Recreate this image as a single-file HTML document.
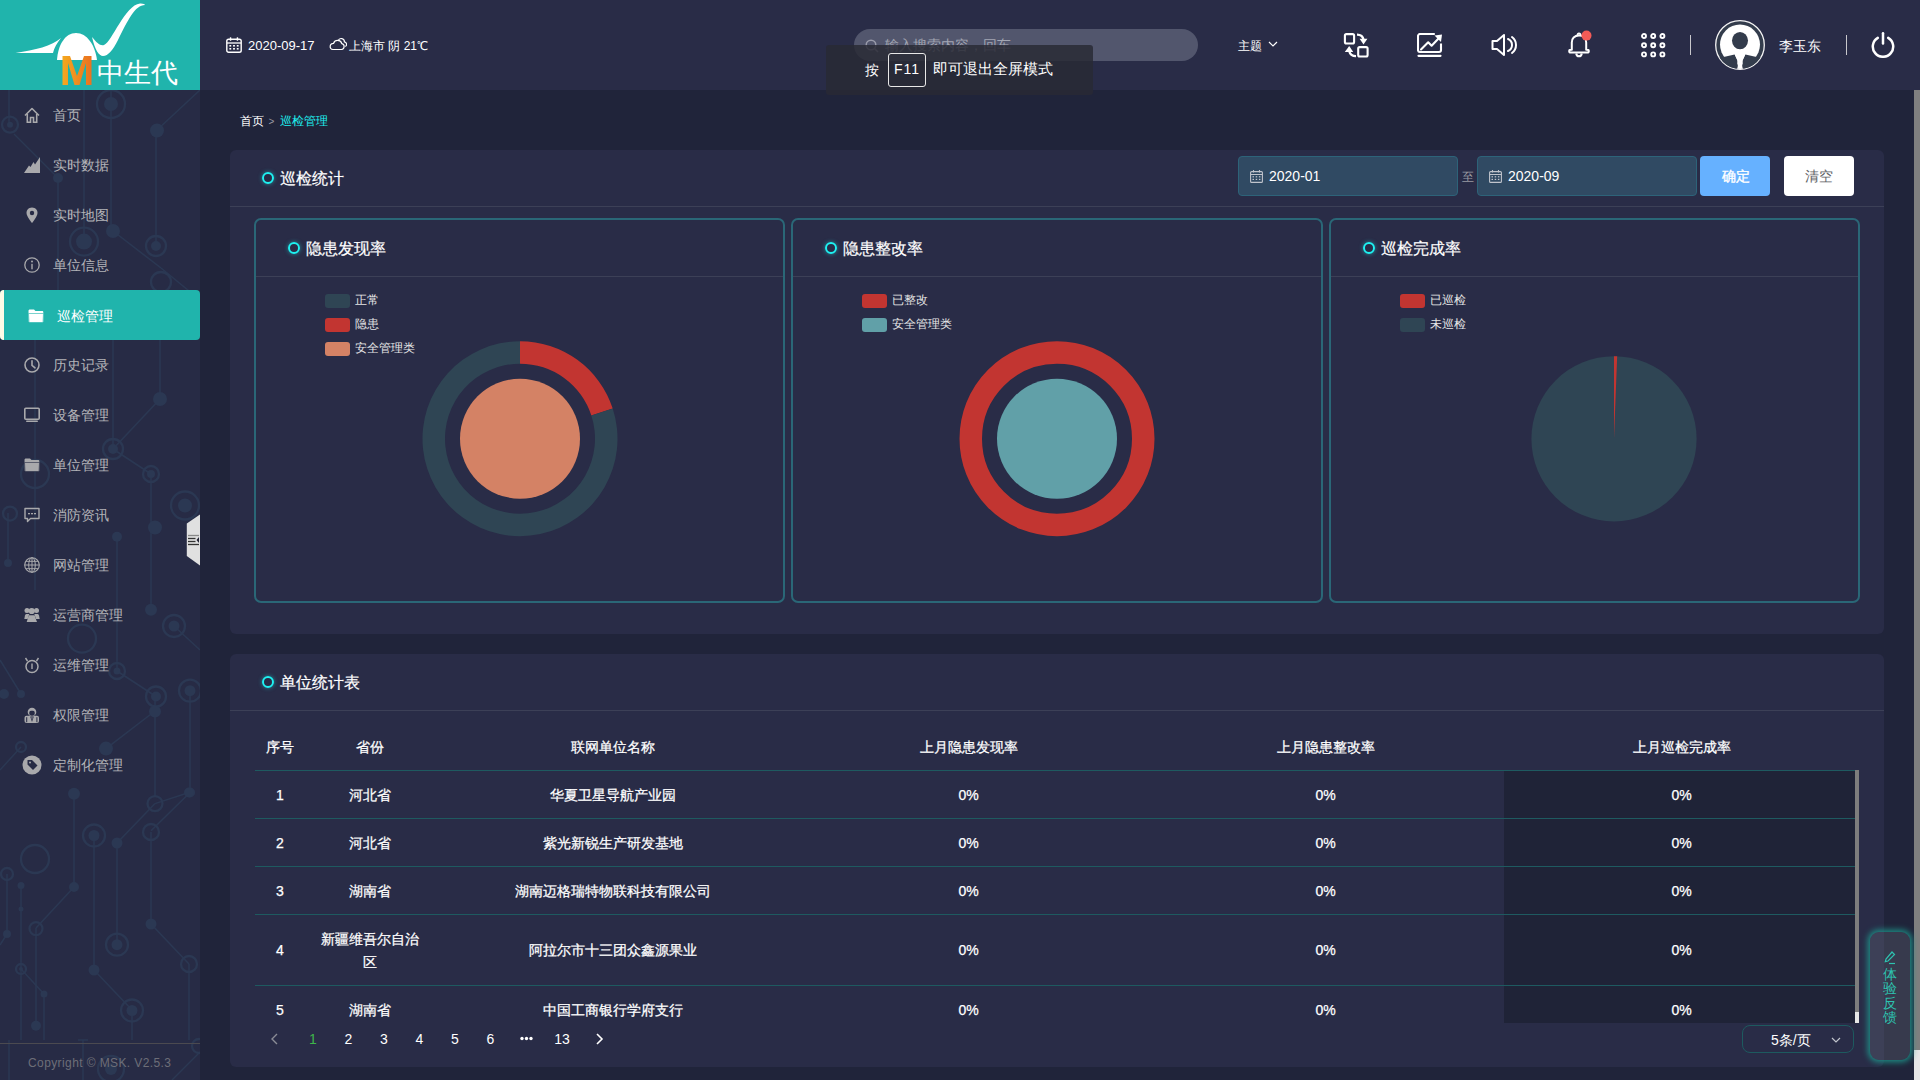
<!DOCTYPE html>
<html><head><meta charset="utf-8">
<style>
*{margin:0;padding:0;box-sizing:border-box}
html,body{width:1920px;height:1080px;overflow:hidden;background:#20243a;font-family:"Liberation Sans",sans-serif;color:#fff}
.abs{position:absolute}
#logo{left:0;top:0;width:200px;height:90px;background:#20b4ac}
#header{left:200px;top:0;width:1720px;height:90px;background:#292c47}
#sidebar{left:0;top:90px;width:200px;height:990px;background:#272b45;overflow:hidden}
.mi{position:absolute;left:0;width:200px;height:50px;color:#b4b4b8;font-size:14px;line-height:50px}
.mi .ic{position:absolute;left:24px;top:17px;width:16px;height:16px}
.mi .tx{position:absolute;left:53px;top:0}
.mi.act{background:#20b4ac;color:#fff;border-radius:4px 4px 4px 4px}
.mi.act:before{content:"";position:absolute;left:0;top:0;width:4px;height:50px;background:#fdfbe6;border-radius:4px 0 0 4px}
.panel{position:absolute;background:#292c47;border-radius:6px}
.ptitle{position:absolute;font-size:16px;line-height:20px;color:#fff;-webkit-text-stroke:0.2px #fff}
.dot{position:absolute;width:12px;height:12px;border:2.5px solid #1ef2f2;border-radius:50%;box-shadow:0 0 4px rgba(30,242,242,.5)}
.card{position:absolute;top:218px;height:385px;border:2px solid #2a6777;border-radius:7px}
.legend{position:absolute;font-size:12px;color:#e6e6e6;line-height:14px}
.sw{position:absolute;width:25px;height:14px;border-radius:3px}
.th{position:absolute;font-size:14px;font-weight:500;color:#fff;-webkit-text-stroke:0.25px #fff;line-height:20px;text-align:center}
.td{position:absolute;font-size:14px;font-weight:500;color:#fff;-webkit-text-stroke:0.25px #fff;line-height:20px;text-align:center}
.rl{position:absolute;left:255px;width:1600px;height:1px;background:#1e5a60}
.pg{position:absolute;top:1029px;font-size:14px;line-height:20px;color:#fff;text-align:center}
</style></head><body>

<!-- LOGO -->
<div id="logo" class="abs">
<svg width="200" height="90" viewBox="0 0 200 90" style="position:absolute;left:0;top:0">
  <path d="M15.5 53 C35 50 52 46 61 38 C57 43 54 48 53 53 Z" fill="#fff"/>
  <path d="M57 60 C58 45 65 33 76 33 C87 33 95 45 97 60 Z" fill="#fff"/>
  <path d="M92 37 C97 43 100 46 104 45 C112 42 125 5 140 3.5 C143 3.3 145 4.3 145 5 C135 5 128 20 118 40 C113 50 108 56 103 56 C99 56 95 50 92 37 Z" fill="#fff"/>
  <defs><linearGradient id="mg" x1="0" x2="1" y1="0" y2="0"><stop offset="0" stop-color="#f5a81f"/><stop offset="1" stop-color="#ea7220"/></linearGradient></defs>
  <path d="M62.5 85 L62.5 56 L70 56 L77 76 L84 56 L91.5 56 L91.5 85 L86 85 L86 63 L79.5 85 L74.5 85 L68 63 L68 85 Z" fill="url(#mg)"/>
  <text x="97" y="82" font-size="27.3" fill="#fff" font-family="Liberation Sans, sans-serif" font-weight="300">中生代</text>
</svg>
</div>

<!-- HEADER -->
<div id="header" class="abs">
<!-- calendar -->
<svg class="abs" style="left:26px;top:37px" width="16" height="16" viewBox="0 0 16 16"><rect x="0.8" y="2.3" width="14.4" height="12.9" rx="1.8" fill="none" stroke="#fff" stroke-width="1.4"/><line x1="1" y1="6" x2="15" y2="6" stroke="#fff" stroke-width="1.3"/><rect x="3.8" y="0.2" width="1.5" height="3.6" rx="0.5" fill="#fff"/><rect x="10.7" y="0.2" width="1.5" height="3.6" rx="0.5" fill="#fff"/><g fill="#fff"><rect x="3.4" y="8" width="1.8" height="1.6"/><rect x="7.1" y="8" width="1.8" height="1.6"/><rect x="10.8" y="8" width="1.8" height="1.6"/><rect x="3.4" y="11" width="1.8" height="1.6"/><rect x="7.1" y="11" width="1.8" height="1.6"/><rect x="10.8" y="11" width="1.8" height="1.6"/></g></svg>
<div class="abs" style="left:48px;top:37px;font-size:13px;line-height:18px;color:#fff">2020-09-17</div>
<!-- cloud -->
<svg class="abs" style="left:129px;top:37px" width="18" height="14" viewBox="0 0 18 14"><path d="M4 12.5 H12.5 A3 3 0 0 0 12.8 6.6 A4.3 4.3 0 0 0 4.6 6.3 A3.1 3.1 0 0 0 4 12.5 Z" fill="none" stroke="#fff" stroke-width="1.2"/><path d="M9.2 3.6 A3.2 3.2 0 0 1 15.4 4.8 A2.6 2.6 0 0 1 16.3 9.6" fill="none" stroke="#fff" stroke-width="1.2"/></svg>
<div class="abs" style="left:149px;top:36.5px;font-size:12px;line-height:18px;color:#fff">上海市 阴 21℃</div>
<!-- search -->
<div class="abs" style="left:654px;top:29px;width:344px;height:32px;border-radius:16px;background:#52566d"></div>
<svg class="abs" style="left:665px;top:39px" width="14" height="14" viewBox="0 0 14 14"><circle cx="6" cy="6" r="4.8" fill="none" stroke="#9a9cab" stroke-width="1.5"/><line x1="9.5" y1="9.5" x2="13" y2="13" stroke="#9a9cab" stroke-width="1.6"/></svg>
<div class="abs" style="left:685px;top:36px;font-size:14px;line-height:18px;color:#a3a6b3">输入搜索内容，回车</div>
<!-- theme -->
<div class="abs" style="left:1038px;top:36.5px;font-size:12px;line-height:18px;color:#fff">主题</div>
<svg class="abs" style="left:1068px;top:41px" width="10" height="7" viewBox="0 0 10 7"><path d="M1 1 L5 5 L9 1" fill="none" stroke="#fff" stroke-width="1.2"/></svg>
<!-- swap icon -->
<svg class="abs" style="left:1143px;top:33px" width="26" height="25" viewBox="0 0 26 25"><rect x="1.9" y="1.1" width="9.2" height="9.4" rx="1.5" fill="none" stroke="#fff" stroke-width="2.1"/><rect x="15.2" y="14.1" width="9.4" height="9.4" rx="1.5" fill="none" stroke="#fff" stroke-width="2.1"/><path d="M14 1.6 C17.5 1.6 20 3.5 20.6 7" fill="none" stroke="#fff" stroke-width="2.3"/><path d="M16.6 5.8 L24.4 5.8 L20.5 11.5 Z" fill="#fff"/><path d="M13 23.2 C9.5 23.2 7 21.5 6.2 18" fill="none" stroke="#fff" stroke-width="2.3"/><path d="M1.8 19 L10.2 19 L6.2 13 Z" fill="#fff"/></svg>
<!-- chart icon -->
<svg class="abs" style="left:1217px;top:33px" width="26" height="25" viewBox="0 0 26 25"><path d="M17.8 1 H3 C2 1 1 2 1 3 V17 C1 18 2 19 3 19 H22 C23 19 24 18 24 17 V10.5" fill="none" stroke="#fff" stroke-width="2.1"/><line x1="1.5" y1="22.8" x2="23.5" y2="22.8" stroke="#fff" stroke-width="2.2" stroke-linecap="round"/><path d="M4 16.5 L11.2 9.3 L14.6 12.7 L21.5 5.5" fill="none" stroke="#fff" stroke-width="2.1" stroke-linecap="round" stroke-linejoin="round"/><path d="M17.5 2.5 L25 1.5 L24 9 Z" fill="#fff"/></svg>
<!-- volume -->
<svg class="abs" style="left:1291px;top:33px" width="27" height="24" viewBox="0 0 27 24"><path d="M1.5 8 H6 L13 2 V22 L6 16 H1.5 Z" fill="none" stroke="#fff" stroke-width="2" stroke-linejoin="round"/><path d="M17 6 A6.5 6.5 0 0 1 17 18" fill="none" stroke="#fff" stroke-width="2" stroke-linecap="round"/><path d="M21 4 A10 10 0 0 1 21 20" fill="none" stroke="#fff" stroke-width="2" stroke-linecap="round"/></svg>
<!-- bell -->
<svg class="abs" style="left:1367px;top:30px" width="26" height="28" viewBox="0 0 26 28"><path d="M4.8 19.8 V12.5 C4.8 8.5 7.3 5.6 12 5.6 C16.7 5.6 19.2 8.5 19.2 12.5 V19.8 H20.2 C21.3 19.8 21.8 20.5 21.8 21.2 C21.8 22 21.3 22.6 20.2 22.6 H3.8 C2.7 22.6 2.2 22 2.2 21.2 C2.2 20.5 2.7 19.8 3.8 19.8 Z" fill="none" stroke="#fff" stroke-width="2" stroke-linejoin="round"/><path d="M10.3 5.8 C10.5 4 11 3.4 12 3.4 C13 3.4 13.5 4 13.7 5.8" fill="none" stroke="#fff" stroke-width="1.8"/><path d="M9.2 23.5 C9.5 25.5 10.7 26.3 12 26.3 C13.3 26.3 14.5 25.5 14.8 23.5" fill="none" stroke="#fff" stroke-width="2"/><circle cx="19.5" cy="5.6" r="5" fill="#f45b57"/></svg>
<!-- grid -->
<svg class="abs" style="left:1441px;top:33px" width="25" height="25" viewBox="0 0 25 25"><g fill="none" stroke="#fff" stroke-width="1.9"><circle cx="3" cy="3" r="2"/><circle cx="12.2" cy="3" r="2"/><circle cx="21.4" cy="3" r="2"/><circle cx="3" cy="12.2" r="2"/><circle cx="12.2" cy="12.2" r="2"/><circle cx="21.4" cy="12.2" r="2"/><circle cx="3" cy="21.4" r="2"/><circle cx="12.2" cy="21.4" r="2"/><circle cx="21.4" cy="21.4" r="2"/></g></svg>
<div class="abs" style="left:1490px;top:35px;width:1px;height:20px;background:#c8c8cc"></div>
<!-- avatar -->
<svg class="abs" style="left:1515px;top:20px" width="50" height="50" viewBox="0 0 50 50"><defs><clipPath id="avc"><circle cx="25" cy="25" r="24"/></clipPath></defs><circle cx="25" cy="25" r="24" fill="#333c4c"/><circle cx="25" cy="25" r="24.3" fill="none" stroke="#f4f4f4" stroke-width="1.3"/><circle cx="25" cy="24.6" r="20" fill="#fff"/><g clip-path="url(#avc)"><ellipse cx="25" cy="20.6" rx="8" ry="8.7" fill="#333c4c"/><path d="M0 50 V38 L8.6 37 L19.6 34.4 L22.6 41 L22.2 47 L21.5 50 H28.5 L27.8 47 L27.4 41 L30.4 34.4 L41.5 37 L50 38 V50 Z" fill="#333c4c"/><path d="M19.8 34.4 H30.2 L27.6 40 L27.2 46 L28 50 H22 L22.8 46 L22.4 40 Z" fill="#fff"/></g></svg>
<div class="abs" style="left:1579px;top:37px;font-size:14px;line-height:18px;color:#fff">李玉东</div>
<div class="abs" style="left:1646px;top:35px;width:1px;height:20px;background:#c8c8cc"></div>
<!-- power -->
<svg class="abs" style="left:1671px;top:32px" width="24" height="26" viewBox="0 0 24 26"><path d="M6.8 5.8 A10.2 10.2 0 1 0 17.2 5.8" fill="none" stroke="#fff" stroke-width="2.5" stroke-linecap="round"/><line x1="12" y1="1.3" x2="12" y2="11.6" stroke="#fff" stroke-width="2.5" stroke-linecap="round"/></svg>
</div>
<!-- F11 tooltip -->
<div class="abs" style="left:826px;top:45px;width:267px;height:50px;background:rgba(40,42,52,.84);border-radius:3px"></div>
<div class="abs" style="left:865px;top:60px;font-size:14px;line-height:20px;color:#fff">按</div>
<div class="abs" style="left:888px;top:53px;width:38px;height:34px;border:1.5px solid #e8e8e8;border-radius:3px;font-size:14px;line-height:31px;text-align:center;color:#fff;letter-spacing:1px">F11</div>
<div class="abs" style="left:933px;top:59px;font-size:15px;line-height:20px;color:#fff">即可退出全屏模式</div>

<!-- SIDEBAR -->
<div id="sidebar" class="abs">
<svg class="abs" style="left:0;top:0" width="200" height="990" viewBox="0 90 200 990"><g fill="none" stroke="#2b3853" stroke-width="1.5"><line x1="111" y1="90" x2="111" y2="231"/><line x1="113" y1="231" x2="161" y2="268"/><line x1="161" y1="268" x2="200" y2="300"/><line x1="156" y1="130" x2="156" y2="246"/><line x1="157" y1="130" x2="200" y2="90"/><line x1="84" y1="90" x2="84" y2="241"/><line x1="9" y1="90" x2="9" y2="125"/><line x1="14" y1="134" x2="58" y2="178"/><line x1="58" y1="178" x2="58" y2="300"/><line x1="160" y1="340" x2="160" y2="399"/><line x1="160" y1="399" x2="113" y2="449"/><line x1="113" y1="449" x2="151" y2="474"/><line x1="151" y1="474" x2="151" y2="590"/><line x1="8" y1="513" x2="8" y2="563"/><line x1="117" y1="536" x2="117" y2="590"/><line x1="35" y1="300" x2="35" y2="590"/><line x1="113" y1="300" x2="113" y2="449"/><line x1="174" y1="626" x2="200" y2="650"/><line x1="117" y1="590" x2="117" y2="671"/><line x1="117" y1="671" x2="156" y2="696.5"/><line x1="155" y1="696" x2="155" y2="796"/><line x1="155" y1="711" x2="106" y2="748.6"/><line x1="190" y1="690" x2="190" y2="792.5"/><line x1="190" y1="792.5" x2="151" y2="830.7"/><line x1="0" y1="660" x2="21" y2="694"/><line x1="21" y1="747" x2="0" y2="770"/><line x1="151" y1="590" x2="151" y2="610"/><line x1="21" y1="885" x2="21" y2="1040"/><line x1="21" y1="969" x2="44" y2="994"/><line x1="44" y1="994" x2="44" y2="1040"/><line x1="7" y1="874" x2="7" y2="934"/><line x1="7" y1="934" x2="0" y2="945"/><line x1="36" y1="928" x2="36" y2="1025"/><line x1="36" y1="928" x2="74" y2="887"/><line x1="74" y1="887" x2="74" y2="790"/><line x1="94" y1="835" x2="94" y2="970"/><line x1="94" y1="970" x2="132" y2="1010"/><line x1="132" y1="1010" x2="132" y2="1040"/><line x1="117" y1="843" x2="117" y2="945"/><line x1="117" y1="843" x2="155" y2="803.6"/><line x1="155" y1="803.6" x2="189" y2="792.5"/><line x1="151" y1="832" x2="151" y2="924"/><line x1="151" y1="924" x2="189" y2="964"/><line x1="189" y1="964" x2="189" y2="1040"/></g><g fill="none" stroke="#2b3853" stroke-width="2.3"><circle cx="111" cy="104" r="14"/><circle cx="156" cy="246" r="10"/><circle cx="161" cy="282" r="10"/><circle cx="84" cy="241.6" r="14"/><circle cx="10" cy="124.7" r="8"/><circle cx="113" cy="449" r="10"/><circle cx="151" cy="474" r="8"/><circle cx="185" cy="505.5" r="14"/><circle cx="10" cy="513.6" r="7"/><circle cx="35" cy="474" r="14"/><circle cx="174" cy="626" r="11"/><circle cx="117" cy="671" r="8"/><circle cx="156" cy="696.5" r="10"/><circle cx="190" cy="690.7" r="11"/><circle cx="21" cy="747" r="5"/><circle cx="82" cy="638.6" r="14"/><circle cx="21" cy="969" r="5"/><circle cx="7" cy="874" r="6"/><circle cx="36" cy="928.6" r="6.5"/><circle cx="94" cy="835.5" r="11"/><circle cx="132" cy="1010.5" r="11"/><circle cx="117" cy="944.7" r="11"/><circle cx="155" cy="803.6" r="7.5"/><circle cx="151" cy="832" r="8"/><circle cx="189" cy="964" r="8"/><circle cx="35" cy="859" r="14"/></g><g fill="#2b3853"><circle cx="111" cy="104" r="7"/><circle cx="113" cy="231" r="7"/><circle cx="156" cy="246" r="5"/><circle cx="157" cy="130.5" r="7"/><circle cx="84" cy="241.6" r="8"/><circle cx="58" cy="178" r="5"/><circle cx="10" cy="124.7" r="3"/><circle cx="160" cy="399" r="7"/><circle cx="113" cy="449" r="5"/><circle cx="155" cy="527.5" r="7"/><circle cx="117" cy="536.7" r="5"/><circle cx="8" cy="563" r="4"/><circle cx="185" cy="505.5" r="7"/><circle cx="151" cy="474" r="4"/><circle cx="151" cy="609.7" r="6"/><circle cx="174" cy="626" r="5.5"/><circle cx="155" cy="711.5" r="6"/><circle cx="106" cy="748.6" r="7"/><circle cx="190" cy="792.5" r="5"/><circle cx="21" cy="694" r="4"/><circle cx="4" cy="694" r="5"/><circle cx="74" cy="793.7" r="6"/><circle cx="117" cy="671" r="3.5"/><circle cx="156" cy="696.5" r="5"/><circle cx="190" cy="690.7" r="5.5"/><circle cx="21" cy="885.5" r="3.5"/><circle cx="21" cy="909" r="2.5"/><circle cx="44" cy="994" r="3.5"/><circle cx="7" cy="934" r="4"/><circle cx="36" cy="1025.8" r="5"/><circle cx="74" cy="887" r="5"/><circle cx="94" cy="835.5" r="5.5"/><circle cx="94" cy="970" r="5.5"/><circle cx="132" cy="1010.5" r="5.5"/><circle cx="117" cy="843" r="5.5"/><circle cx="117" cy="944.7" r="5.5"/><circle cx="189" cy="792.5" r="5"/><circle cx="151" cy="924" r="5.5"/><circle cx="21" cy="969" r="2"/></g></svg><svg class="abs" style="left:0;top:0" width="200" height="990" viewBox="0 90 200 990"><g fill="none" stroke="#2b3853" stroke-width="1.5"><line x1="9" y1="1040" x2="9" y2="1080"/><line x1="83" y1="1040" x2="83" y2="1080"/><line x1="200" y1="1052" x2="172" y2="1080"/><line x1="78" y1="1040" x2="88" y2="1040"/></g><g fill="none" stroke="#2b3853" stroke-width="2.3"><circle cx="111" cy="1069" r="13"/><circle cx="199" cy="1046" r="7"/></g><circle cx="111" cy="1069" r="6" fill="#2b3853"/></svg>
<div class="mi" style="top:0px"><svg class="ic" width="16" height="16" viewBox="0 0 16 16" overflow="visible"><path d="M1 8.5 L8 1.5 L15 8.5" fill="none" stroke="#a9a9ac" stroke-width="1.6" stroke-linejoin="round"/><path d="M3.3 7 V15.3 H6.5 V10.5 H9.5 V15.3 H12.7 V7" fill="none" stroke="#a9a9ac" stroke-width="1.6"/></svg><span class="tx">首页</span></div>
<div class="mi" style="top:50px"><svg class="ic" width="16" height="16" viewBox="0 0 16 16" overflow="visible"><path d="M0 16 L5 8.5 L6.5 10 L9.5 5 L11 7.5 L16 0 V16 Z" fill="#a9a9ac"/></svg><span class="tx">实时数据</span></div>
<div class="mi" style="top:100px"><svg class="ic" width="16" height="16" viewBox="0 0 16 16" overflow="visible"><path d="M8 0.5 C4.3 0.5 2.5 3.3 2.5 6 C2.5 9.5 8 16 8 16 C8 16 13.5 9.5 13.5 6 C13.5 3.3 11.7 0.5 8 0.5 Z" fill="#a9a9ac"/><circle cx="8" cy="6" r="2.2" fill="#272b45"/></svg><span class="tx">实时地图</span></div>
<div class="mi" style="top:150px"><svg class="ic" width="16" height="16" viewBox="0 0 16 16" overflow="visible"><circle cx="8" cy="8" r="7.2" fill="none" stroke="#a9a9ac" stroke-width="1.3"/><circle cx="8" cy="4.6" r="1" fill="#a9a9ac"/><rect x="7.3" y="6.8" width="1.4" height="5.5" fill="#a9a9ac"/></svg><span class="tx">单位信息</span></div>
<div class="mi act" style="top:200px"><svg class="ic" style="left:28px;top:18px" width="16" height="16" viewBox="0 0 16 16"><path d="M0.5 3 C0.5 2 1 1.5 2 1.5 H6 L7.5 3 H14 C15 3 15.3 3.5 15.3 4 V14 H0.7 Z" fill="#fff"/><path d="M0.5 5.5 H15.5 L15 14.5 H1 Z" fill="#fff" stroke="#20b4ac" stroke-width="0.6"/></svg><span class="tx" style="left:57px;top:1px">巡检管理</span></div>
<div class="mi" style="top:250px"><svg class="ic" width="16" height="16" viewBox="0 0 16 16" overflow="visible"><circle cx="8" cy="8" r="7" fill="none" stroke="#a9a9ac" stroke-width="1.6"/><path d="M8 3.8 V8.3 L11 10.8" fill="none" stroke="#a9a9ac" stroke-width="1.6" stroke-linecap="round"/></svg><span class="tx">历史记录</span></div>
<div class="mi" style="top:300px"><svg class="ic" width="16" height="16" viewBox="0 0 16 16" overflow="visible"><rect x="0.8" y="1.3" width="14.4" height="11" rx="1" fill="none" stroke="#a9a9ac" stroke-width="1.6"/><rect x="2" y="13.5" width="12" height="1.6" rx="0.8" fill="#a9a9ac"/></svg><span class="tx">设备管理</span></div>
<div class="mi" style="top:350px"><svg class="ic" width="16" height="16" viewBox="0 0 16 16" overflow="visible"><path d="M0.5 3 C0.5 2 1 1.5 2 1.5 H6 L7.5 3 H14 C15 3 15.3 3.5 15.3 4 V14 H0.7 Z" fill="#a9a9ac"/><path d="M0.5 5.5 H15.5 L15 14.5 H1 Z" fill="#a9a9ac" stroke="#272b45" stroke-width="0.6"/></svg><span class="tx">单位管理</span></div>
<div class="mi" style="top:400px"><svg class="ic" width="16" height="16" viewBox="0 0 16 16" overflow="visible"><path d="M1 1.5 H15 V11.5 H6.5 L3.5 14.5 V11.5 H1 Z" fill="none" stroke="#a9a9ac" stroke-width="1.4" stroke-linejoin="round"/><rect x="4" y="6" width="2" height="1.3" fill="#a9a9ac"/><rect x="7" y="6" width="2" height="1.3" fill="#a9a9ac"/><rect x="10" y="6" width="2" height="1.3" fill="#a9a9ac"/></svg><span class="tx">消防资讯</span></div>
<div class="mi" style="top:450px"><svg class="ic" width="16" height="16" viewBox="0 0 16 16" overflow="visible"><circle cx="8" cy="8" r="7.3" fill="none" stroke="#a9a9ac" stroke-width="1.1"/><ellipse cx="8" cy="8" rx="3.3" ry="7.3" fill="none" stroke="#a9a9ac" stroke-width="1"/><line x1="8" y1="0.7" x2="8" y2="15.3" stroke="#a9a9ac" stroke-width="1"/><line x1="0.7" y1="8" x2="15.3" y2="8" stroke="#a9a9ac" stroke-width="1"/><path d="M1.8 4.3 H14.2 M1.8 11.7 H14.2" stroke="#a9a9ac" stroke-width="1"/></svg><span class="tx">网站管理</span></div>
<div class="mi" style="top:500px"><svg class="ic" width="16" height="16" viewBox="0 0 16 16" overflow="visible"><circle cx="7.7" cy="4" r="3.1" fill="#a9a9ac"/><circle cx="3" cy="3.6" r="2.5" fill="#a9a9ac"/><circle cx="12.5" cy="3.6" r="2.5" fill="#a9a9ac"/><path d="M0.3 12 L1 8.5 C1.3 7.3 2 7 3 7 H5.3 L3.6 12 Z" fill="#a9a9ac"/><path d="M15.7 12 L15 8.5 C14.7 7.3 14 7 13 7 H10.3 L12 12 Z" fill="#a9a9ac"/><path d="M4.8 8.2 H10.6 L13 15 H2.7 Z" fill="#a9a9ac"/></svg><span class="tx">运营商管理</span></div>
<div class="mi" style="top:550px"><svg class="ic" width="16" height="16" viewBox="0 0 16 16" overflow="visible"><circle cx="8" cy="9.5" r="6" fill="none" stroke="#a9a9ac" stroke-width="1.5"/><path d="M3.5 4 L1.5 1 M12.5 4 L14.5 1" stroke="#a9a9ac" stroke-width="1.4"/><rect x="7.3" y="6.5" width="1.4" height="5.5" fill="#a9a9ac"/></svg><span class="tx">运维管理</span></div>
<div class="mi" style="top:600px"><svg class="ic" width="16" height="16" viewBox="0 0 16 16" overflow="visible"><circle cx="8" cy="5" r="4.3" fill="#a9a9ac"/><path d="M5.3 5 C5.5 4.2 6.5 3.8 8 3.8 C9.5 3.8 10.5 4.2 10.7 5 V6.5 C10.7 8 9.5 9 8 9 C6.5 9 5.3 8 5.3 6.5 Z" fill="#272b45"/><rect x="0.5" y="8.8" width="14.5" height="7.2" rx="2" fill="#a9a9ac"/><rect x="2.2" y="10.2" width="1" height="5" fill="#272b45"/><rect x="12.4" y="10.2" width="1" height="5" fill="#272b45"/><path d="M6.2 9.5 H9.8 L8 15 Z" fill="#272b45"/><path d="M7.3 10.3 H8.7 L8 13 Z" fill="#a9a9ac"/></svg><span class="tx">权限管理</span></div>
<div class="mi" style="top:650px"><svg class="ic" width="16" height="16" viewBox="0 0 16 16" overflow="visible"><circle cx="8" cy="8" r="9.5" fill="#a9a9ac"/><path d="M3.5 5 V3.5 C3.5 3.2 3.7 3 4 3 H8 L13.5 8.5 L9 13 L3.5 7.5 Z" fill="#272b45"/><circle cx="6" cy="5.5" r="1" fill="#a9a9ac"/></svg><span class="tx">定制化管理</span></div>
<div class="abs" style="left:0;top:953px;width:200px;height:1px;background:#4b4a50"></div>
<div class="abs" style="left:28px;top:965px;font-size:12px;line-height:16px;color:#6d6e78;letter-spacing:0.4px">Copyright © MSK. V2.5.3</div>
</div>
<svg class="abs" style="left:186px;top:514px" width="14" height="52" viewBox="0 0 14 52"><path d="M14 0.5 V51.5 L0.8 42 V9.5 Z" fill="#e0e0e0"/><g stroke-width="1.3"><line x1="2" y1="21.5" x2="13" y2="21.5" stroke="#888"/><line x1="2" y1="24.5" x2="9.5" y2="24.5" stroke="#333"/><line x1="2" y1="27.5" x2="9.5" y2="27.5" stroke="#333"/><line x1="2" y1="30.5" x2="13" y2="30.5" stroke="#333"/></g><path d="M13 23 L10.5 26 L13 29 Z" fill="#223"/></svg>

<!-- MAIN -->
<div class="abs" style="left:240px;top:113px;font-size:12px;line-height:16px;color:#fff">首页</div><div class="abs" style="left:268.5px;top:114px;font-size:10px;line-height:16px;color:#9a9aa2">&gt;</div><div class="abs" style="left:280px;top:113px;font-size:12px;line-height:16px;color:#1ef0f0">巡检管理</div>

<div class="panel" style="left:230px;top:150px;width:1654px;height:484px">
<div class="dot" style="left:32px;top:22px"></div><div class="ptitle" style="left:50px;top:19px">巡检统计</div>
<div class="abs" style="left:0;top:56px;width:1654px;height:1px;background:#3c4057"></div>
<div class="abs" style="left:1008px;top:6px;width:220px;height:40px;background:#304a63;border:1px solid #2d6379;border-radius:4px"><svg class="abs" style="left:11px;top:13px" width="13" height="13" viewBox="0 0 13 13"><rect x="0.6" y="1.6" width="11.8" height="10.8" rx="1" fill="none" stroke="#c0c4cc" stroke-width="1.1"/><line x1="0.6" y1="4.5" x2="12.4" y2="4.5" stroke="#c0c4cc" stroke-width="1"/><line x1="3.5" y1="0" x2="3.5" y2="2.5" stroke="#c0c4cc" stroke-width="1.1"/><line x1="9.5" y1="0" x2="9.5" y2="2.5" stroke="#c0c4cc" stroke-width="1.1"/><g fill="#c0c4cc"><rect x="2.5" y="6.2" width="1.5" height="1.2"/><rect x="5.7" y="6.2" width="1.5" height="1.2"/><rect x="8.9" y="6.2" width="1.5" height="1.2"/><rect x="2.5" y="8.8" width="1.5" height="1.2"/><rect x="5.7" y="8.8" width="1.5" height="1.2"/><rect x="8.9" y="8.8" width="1.5" height="1.2"/></g></svg><div class="abs" style="left:30px;top:10px;font-size:14px;line-height:18px;color:#fff">2020-01</div></div>
<div class="abs" style="left:1232px;top:19px;font-size:12px;line-height:16px;color:#9a9ba3">至</div>
<div class="abs" style="left:1247px;top:6px;width:220px;height:40px;background:#304a63;border:1px solid #2d6379;border-radius:4px"><svg class="abs" style="left:11px;top:13px" width="13" height="13" viewBox="0 0 13 13"><rect x="0.6" y="1.6" width="11.8" height="10.8" rx="1" fill="none" stroke="#c0c4cc" stroke-width="1.1"/><line x1="0.6" y1="4.5" x2="12.4" y2="4.5" stroke="#c0c4cc" stroke-width="1"/><line x1="3.5" y1="0" x2="3.5" y2="2.5" stroke="#c0c4cc" stroke-width="1.1"/><line x1="9.5" y1="0" x2="9.5" y2="2.5" stroke="#c0c4cc" stroke-width="1.1"/><g fill="#c0c4cc"><rect x="2.5" y="6.2" width="1.5" height="1.2"/><rect x="5.7" y="6.2" width="1.5" height="1.2"/><rect x="8.9" y="6.2" width="1.5" height="1.2"/><rect x="2.5" y="8.8" width="1.5" height="1.2"/><rect x="5.7" y="8.8" width="1.5" height="1.2"/><rect x="8.9" y="8.8" width="1.5" height="1.2"/></g></svg><div class="abs" style="left:30px;top:10px;font-size:14px;line-height:18px;color:#fff">2020-09</div></div>
<div class="abs" style="left:1470px;top:6px;width:70px;height:40px;background:#66b1ff;border-radius:4px;font-size:14px;line-height:41px;text-indent:2px;text-align:center;color:#fff;-webkit-text-stroke:0.35px #fff">确定</div>
<div class="abs" style="left:1554px;top:6px;width:70px;height:40px;background:#fff;border-radius:4px;font-size:14px;line-height:41px;text-align:center;color:#606266">清空</div>
</div>
<div class="card" style="left:254px;width:531px">
<div class="dot" style="left:32px;top:22px"></div><div class="ptitle" style="left:50px;top:19px">隐患发现率</div>
<div class="abs" style="left:0;top:56px;width:527px;height:1px;background:#3c4057"></div>
<div class="sw" style="left:69px;top:74px;background:#2f4554"></div><div class="legend" style="left:99px;top:73px">正常</div>
<div class="sw" style="left:69px;top:98px;background:#c23531"></div><div class="legend" style="left:99px;top:97px">隐患</div>
<div class="sw" style="left:69px;top:122px;background:#d48265"></div><div class="legend" style="left:99px;top:121px">安全管理类</div>
</div>
<div class="card" style="left:791px;width:532px">
<div class="dot" style="left:32px;top:22px"></div><div class="ptitle" style="left:50px;top:19px">隐患整改率</div>
<div class="abs" style="left:0;top:56px;width:528px;height:1px;background:#3c4057"></div>
<div class="sw" style="left:69px;top:74px;background:#c23531"></div><div class="legend" style="left:99px;top:73px">已整改</div>
<div class="sw" style="left:69px;top:98px;background:#61a0a8"></div><div class="legend" style="left:99px;top:97px">安全管理类</div>
</div>
<div class="card" style="left:1329px;width:531px">
<div class="dot" style="left:32px;top:22px"></div><div class="ptitle" style="left:50px;top:19px">巡检完成率</div>
<div class="abs" style="left:0;top:56px;width:527px;height:1px;background:#3c4057"></div>
<div class="sw" style="left:69px;top:74px;background:#c23531"></div><div class="legend" style="left:99px;top:73px">已巡检</div>
<div class="sw" style="left:69px;top:98px;background:#2f4554"></div><div class="legend" style="left:99px;top:97px">未巡检</div>
</div>
<svg class="abs" style="left:0;top:0" width="1920" height="1080" viewBox="0 0 1920 1080">
<path d="M520.00 341.20 A97.5 97.5 0 0 1 612.73 408.57 L591.33 415.52 A75 75 0 0 0 520.00 363.70 Z" fill="#c23531"/>
<path d="M612.73 408.57 A97.5 97.5 0 1 1 520.00 341.20 L520.00 363.70 A75 75 0 1 0 591.33 415.52 Z" fill="#2f4554"/>
<circle cx="520" cy="438.7" r="60" fill="#d48265"/>
<circle cx="1057" cy="438.7" r="86.25" fill="none" stroke="#c23531" stroke-width="22.5"/>
<circle cx="1057" cy="438.7" r="60" fill="#61a0a8"/>
<circle cx="1614" cy="438.8" r="82.6" fill="#2f4554"/>
<path d="M1614 438.8 L1614.00 356.20 A82.6 82.6 0 0 1 1617.17 356.26 Z" fill="#c23531"/>
</svg>
<div class="panel" style="left:230px;top:654px;width:1654px;height:413px">
<div class="dot" style="left:32px;top:22px"></div><div class="ptitle" style="left:50px;top:19px">单位统计表</div>
<div class="abs" style="left:0;top:56px;width:1654px;height:1px;background:#3c4057"></div>
</div>
<div class="abs" style="left:1504px;top:770px;width:351px;height:253px;background:#1f2337"></div>
<div class="th" style="left:255px;top:737px;width:50px">序号</div>
<div class="th" style="left:305px;top:737px;width:130px">省份</div>
<div class="th" style="left:435px;top:737px;width:355px">联网单位名称</div>
<div class="th" style="left:790px;top:737px;width:357px">上月隐患发现率</div>
<div class="th" style="left:1147px;top:737px;width:357px">上月隐患整改率</div>
<div class="th" style="left:1504px;top:737px;width:355px">上月巡检完成率</div>
<div class="rl" style="top:770px"></div>
<div class="rl" style="top:818px"></div>
<div class="rl" style="top:866px"></div>
<div class="rl" style="top:914px"></div>
<div class="rl" style="top:985px"></div>
<div class="td" style="left:255px;top:785px;width:50px">1</div>
<div class="td" style="left:305px;top:785px;width:130px">河北省</div>
<div class="td" style="left:435px;top:785px;width:355px">华夏卫星导航产业园</div>
<div class="td" style="left:790px;top:785px;width:357px">0%</div>
<div class="td" style="left:1147px;top:785px;width:357px">0%</div>
<div class="td" style="left:1504px;top:785px;width:355px">0%</div>
<div class="td" style="left:255px;top:833px;width:50px">2</div>
<div class="td" style="left:305px;top:833px;width:130px">河北省</div>
<div class="td" style="left:435px;top:833px;width:355px">紫光新锐生产研发基地</div>
<div class="td" style="left:790px;top:833px;width:357px">0%</div>
<div class="td" style="left:1147px;top:833px;width:357px">0%</div>
<div class="td" style="left:1504px;top:833px;width:355px">0%</div>
<div class="td" style="left:255px;top:881px;width:50px">3</div>
<div class="td" style="left:305px;top:881px;width:130px">湖南省</div>
<div class="td" style="left:435px;top:881px;width:355px">湖南迈格瑞特物联科技有限公司</div>
<div class="td" style="left:790px;top:881px;width:357px">0%</div>
<div class="td" style="left:1147px;top:881px;width:357px">0%</div>
<div class="td" style="left:1504px;top:881px;width:355px">0%</div>
<div class="td" style="left:255px;top:940px;width:50px">4</div>
<div class="td" style="left:315px;top:928px;width:110px;line-height:23px">新疆维吾尔自治<br>区</div>
<div class="td" style="left:435px;top:940px;width:355px">阿拉尔市十三团众鑫源果业</div>
<div class="td" style="left:790px;top:940px;width:357px">0%</div>
<div class="td" style="left:1147px;top:940px;width:357px">0%</div>
<div class="td" style="left:1504px;top:940px;width:355px">0%</div>
<div class="td" style="left:255px;top:1000px;width:50px">5</div>
<div class="td" style="left:305px;top:1000px;width:130px">湖南省</div>
<div class="td" style="left:435px;top:1000px;width:355px">中国工商银行学府支行</div>
<div class="td" style="left:790px;top:1000px;width:357px">0%</div>
<div class="td" style="left:1147px;top:1000px;width:357px">0%</div>
<div class="td" style="left:1504px;top:1000px;width:355px">0%</div>
<div class="abs" style="left:1855px;top:770px;width:4px;height:253px;background:#7d7d7d"></div><div class="abs" style="left:1855px;top:1012px;width:4px;height:11px;background:#e6e6e6"></div>
<svg class="abs" style="left:270px;top:1033px" width="9" height="12" viewBox="0 0 9 12"><path d="M7 1 L2 6 L7 11" fill="none" stroke="#8a8c96" stroke-width="1.4"/></svg>
<div class="pg" style="left:293px;width:40px;color:#3eb44a">1</div>
<div class="pg" style="left:328.5px;width:40px;color:#fff">2</div>
<div class="pg" style="left:364px;width:40px;color:#fff">3</div>
<div class="pg" style="left:399.5px;width:40px;color:#fff">4</div>
<div class="pg" style="left:435px;width:40px;color:#fff">5</div>
<div class="pg" style="left:470.5px;width:40px;color:#fff">6</div>
<div class="pg" style="left:542px;width:40px;color:#fff">13</div>
<svg class="abs" style="left:520px;top:1036px" width="13" height="5" viewBox="0 0 13 5"><circle cx="2" cy="2.5" r="1.7" fill="#fff"/><circle cx="6.5" cy="2.5" r="1.7" fill="#fff"/><circle cx="11" cy="2.5" r="1.7" fill="#fff"/></svg>
<svg class="abs" style="left:595px;top:1033px" width="9" height="12" viewBox="0 0 9 12"><path d="M2 1 L7 6 L2 11" fill="none" stroke="#fff" stroke-width="1.6"/></svg>
<div class="abs" style="left:1742px;top:1025px;width:112px;height:28px;border:1px solid #1d5a5f;border-radius:8px"></div>
<div class="abs" style="left:1771px;top:1031px;font-size:14px;line-height:18px;color:#fff">5条/页</div>
<svg class="abs" style="left:1831px;top:1037px" width="10" height="7" viewBox="0 0 10 7"><path d="M1 1 L5 5 L9 1" fill="none" stroke="#c0c4cc" stroke-width="1.2"/></svg>
<div class="abs" style="left:1914px;top:90px;width:6px;height:960px;background:#7f7f7f"></div><div class="abs" style="left:1914px;top:1050px;width:6px;height:30px;background:#e6e6e6"></div>
<div class="abs" style="left:1870px;top:932px;width:40px;height:128px;border-radius:9px;background:rgba(122,124,137,.25);box-shadow:0 0 6px 2px rgba(30,152,140,.95)"></div>
<svg class="abs" style="left:1884px;top:951px" width="12" height="14" viewBox="0 0 12 14"><path d="M8 1 L10.5 3.5 L4 10 L1.3 10.7 L2 8 Z" fill="none" stroke="#2ec2b0" stroke-width="1.2"/><line x1="5" y1="12.5" x2="11" y2="12.5" stroke="#2ec2b0" stroke-width="1.2"/></svg>
<div class="abs" style="left:1882px;top:967px;width:16px;font-size:14px;line-height:14.3px;color:#2ec2b0;text-align:center">体<br>验<br>反<br>馈</div>

</body></html>
